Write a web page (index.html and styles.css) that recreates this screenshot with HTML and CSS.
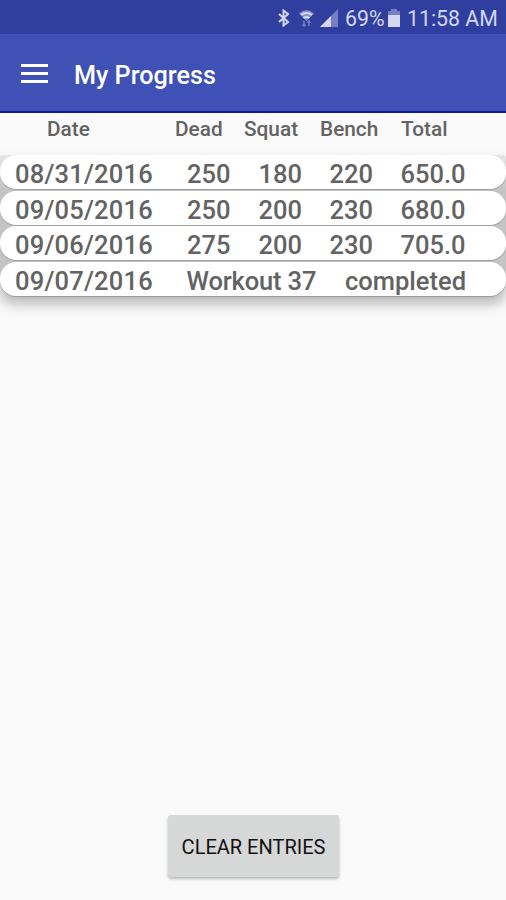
FILE: index.html
```html
<!DOCTYPE html>
<html lang="en">
<head>
<meta charset="utf-8">
<title>My Progress</title>
<link rel="stylesheet" href="styles.css">
</head>
<body>
<div class="status">
  <svg class="bt" width="12" height="18" viewBox="0 0 12 18"><path d="M1 5l9 8-4.500 3.500v-15L10 5l-9 8"/></svg>
  <svg class="wifi" width="17" height="18" viewBox="0 0 17 18"><path class="fan" d="M1 4.500Q8.500-2 16 4.500L8.500 12z"/><path class="arc" d="M3 6q5.500-4 11 0M5.500 9q3-2 6 0"/><path class="arrows" d="M6 12v5M11 12v5M4.500 15.500L6 17l1.500-1.500M9.500 13.500L11 12l1.500 1.500"/></svg>
  <svg class="signal" width="18" height="18" viewBox="0 0 18 18"><path class="dim" d="M0 18L18 0v18z"/><path class="lit" d="M0 18L11 7v11z"/></svg>
  <span class="percent">69%</span>
  <svg class="battery" width="12" height="18" viewBox="0 0 12 18"><path class="dim" d="M3 0h6v2h3v5H0V2h3z"/><path class="lit" d="M0 6h12v12H0z"/></svg>
  <span class="clock">11:58 AM</span>
</div>
<header class="bar">
  <div class="menu"><i></i><i></i><i></i></div>
  <h1>My Progress</h1>
</header>
<div class="grid head"><span>Date</span><span>Dead</span><span>Squat</span><span>Bench</span><span>Total</span></div>
<main class="list">
  <div class="grid row"><span class="date">08/31/2016</span><span>250</span><span>180</span><span>220</span><span>650.0</span></div>
  <div class="grid row"><span class="date">09/05/2016</span><span>250</span><span>200</span><span>230</span><span>680.0</span></div>
  <div class="grid row"><span class="date">09/06/2016</span><span>275</span><span>200</span><span>230</span><span>705.0</span></div>
  <div class="grid row note"><span class="date">09/07/2016</span><span class="workout">Workout 37</span><span>completed</span></div>
</main>
<button class="clear">CLEAR ENTRIES</button>
</body>
</html>
```
FILE: styles.css
```css
* { box-sizing: border-box; }
body {
  margin: 0;
  height: 900px;
  overflow: hidden;
  display: flex;
  flex-direction: column;
  background: #fafafa;
  font-family: Roboto, "Liberation Sans", sans-serif;
  color: #636363;
}
.status {
  height: 34px;
  flex: none;
  display: flex;
  align-items: center;
  padding: 2px 9px 0 0;
  justify-content: flex-end;
  background: #303f9f;
  color: #d3d7f0;
  font-size: 21.3px;
  white-space: nowrap;
}
.status svg { flex: none; fill: none; stroke: #d3d7f0; }
.bt { margin-right: 8px; stroke-width: 2; }
.wifi { margin-right: 5px; }
.wifi .fan { fill: #8791cc; stroke: none; }
.wifi .arc { stroke-width: 2; }
.wifi .arrows { stroke: #7580c4; stroke-width: 1.5; }
.signal { margin-right: 7px; }
.status .dim { fill: #7580c4; stroke: none; }
.status .lit { fill: #d3d7f0; stroke: none; }
.percent { width: 43px; }
.battery { margin-right: 7px; }
.clock { width: 90px; }
.bar {
  height: 79px;
  flex: none;
  display: flex;
  align-items: center;
  padding: 2px 0 0 21px;
  background: #3f51b5;
  border-bottom: 2px solid #1019a0;
}
.menu { width: 27px; display: grid; gap: 5px; margin-right: 26px; }
.menu i { height: 3px; background: #fff; }
h1 { margin: 0; padding-top: 3px; font-size: 25.2px; font-weight: 500; color: #fff; white-space: nowrap; }
.grid {
  display: grid;
  grid-template-columns: 172px 71.5px 71px 71px 1fr;
  padding-left: 15px;
  white-space: nowrap;
  font-weight: 500;
}
.head {
  height: 42px;
  flex: none;
  padding-left: 47px;
  grid-template-columns: 128px 69px 76px 81px 1fr;
  font-size: 20.8px;
  line-height: 32px;
}
.list {
  flex: none;
  display: grid;
  gap: 1.5px;
  background: linear-gradient(#e6e6e6, #c4c4c4 35px);
  border-radius: 2px 2px 14px 14px;
  box-shadow: 0 8px 13px #0004;
}
.row {
  height: 34px;
  border-radius: 16px;
  background: #fff;
  font-size: 25.5px;
  line-height: 38px;
  box-shadow: 0 1px 1px #0003;
}
.date { letter-spacing: 0.2px; }
.workout { letter-spacing: -0.15px; }
.note { grid-template-columns: 171.5px 158.500px 1fr; }
.clear {
  margin: auto auto 23px 168px;
  width: 171px;
  height: 62px;
  padding: 2px 0 0;
  border: 0;
  border-radius: 3px;
  background: #d6d7d7;
  box-shadow: 0 2px 3px #0004;
  color: #111;
  font: 20px Roboto, "Liberation Sans", sans-serif;
}
```
